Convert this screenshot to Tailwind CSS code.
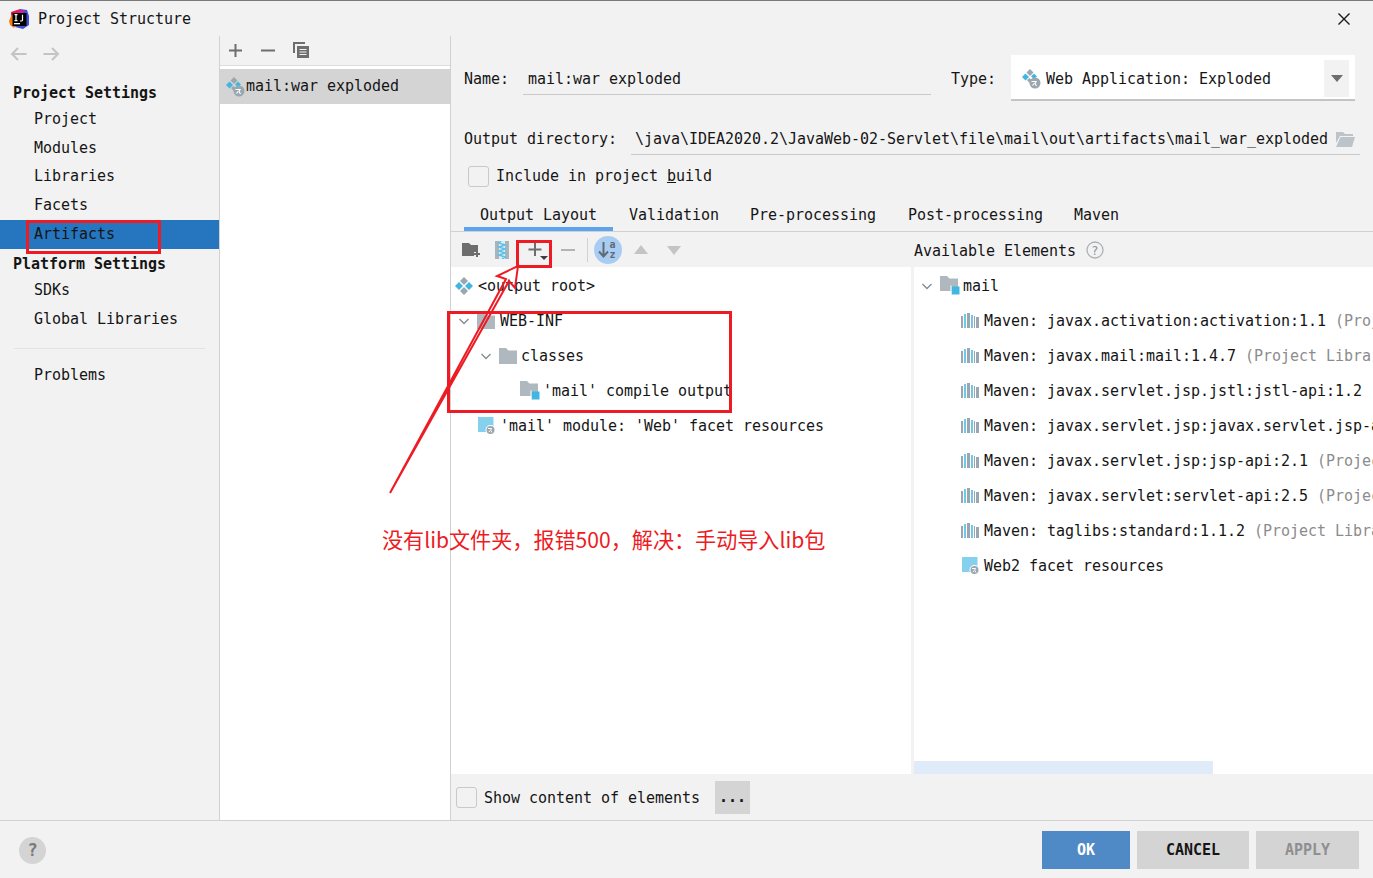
<!DOCTYPE html>
<html lang="en">
<head>
<meta charset="UTF-8">
<title>Project Structure</title>
<script src="https://cdn.jsdelivr.net/npm/@tailwindcss/browser@4"></script>
</head>
<body class="bg-[#f2f2f2]">
<svg width="0" height="0" class="absolute">
  <defs>
    <symbol id="artifact" viewBox="0 0 18 18">
      <path d="M9 0l4 4-4 4-4-4z" fill="#9aa7b0"/><path d="M9 10l4 4-4 4-4-4z" fill="#9aa7b0"/>
      <path d="M4 5l4 4-4 4-4-4z" fill="#40b6e0"/><path d="M14 5l4 4-4 4-4-4z" fill="#40b6e0"/>
    </symbol>
    <symbol id="artifactweb" viewBox="0 0 20 20">
      <path d="M9 0l3.500 3.500L9 7 5.500 3.500z" fill="#9aa7b0"/><path d="M4.500 4.500L8 8 4.500 11.500 1 8z" fill="#40b6e0"/>
      <path d="M13 4.500L16 7.500 13 10 10 7.500z" fill="#40b6e0"/><path d="M8.500 9l2 2-2 3-2.500-3z" fill="#9aa7b0"/>
      <circle cx="14" cy="14" r="5.500" fill="#9aa7b0"/><path d="M10.500 12.500h4.500l-1 2 1.500 2.500M11.500 16.500l1.500-2" fill="none" stroke="#fff" stroke-width="1.200"/>
    </symbol>
    <symbol id="folder" viewBox="0 0 18 16"><path d="M0 0h7l2.500 2.500H18V16H0z" fill="#afb8bf"/></symbol>
    <symbol id="source" viewBox="0 0 20 19">
      <path d="M0 0h7l2.500 2.500H18V15H0z" fill="#afb8bf"/><rect x="11.500" y="10.500" width="8" height="8" fill="#40b6e0"/><rect x="10.500" y="9.500" width="1" height="9" fill="#fff"/>
    </symbol>
    <symbol id="maven" viewBox="0 0 18 15">
      <rect y="3" width="2" height="12" fill="#9aa7b0"/><rect x="3" y="1" width="2" height="14" fill="#40b6e0" opacity=".75"/><rect x="6" y="0" width="3" height="15" fill="#9aa7b0"/>
      <rect x="10" y="2" width="2" height="13" fill="#40b6e0" opacity=".75"/><rect x="13" y="3" width="1" height="12" fill="#9aa7b0"/><rect x="15" y="4" width="3" height="11" fill="#9aa7b0"/>
    </symbol>
    <symbol id="webres" viewBox="0 0 18 18">
      <rect width="15.500" height="15" fill="#85d0ec"/><circle cx="12.500" cy="13" r="5" fill="#fff"/><circle cx="12.500" cy="13" r="4" fill="#9aa7b0"/>
      <path d="M10 11.500h3.500l-.8 1.800 1.300 2.200M11 15l1-1.500" fill="none" stroke="#fff"/>
    </symbol>
    <symbol id="chevron" viewBox="0 0 12 12"><path d="M1.500 4l4.500 4.500L10.500 4" fill="none" stroke="#7f8b91" stroke-width="1.300"/></symbol>
  </defs>
</svg>

<div class="relative w-[1373px] h-[878px] overflow-hidden flex flex-col border-t border-[#7a7a7a] font-['DejaVu_Sans_Mono',monospace] text-[15px] tracking-[-0.03px] leading-5 text-[#151515] bg-[#f2f2f2]">

  <!-- title bar -->
  <div class="h-[35px] flex items-center pl-[9px] pr-[22px] shrink-0">
    <svg width="20" height="20" viewBox="0 0 20 20">
      <path d="M2 3l9-3 3 2-5 9-7 3z" fill="#e8175d"/><path d="M0 12l3-7 6 8-4 6-4-3z" fill="#f97a12"/>
      <path d="M11 0l7 1 2 6v9l-6 4-8-2 5-10z" fill="#3f51d9"/><path d="M9 1h7l-5 8z" fill="#c9258b"/>
      <rect x="3.500" y="4" width="14" height="13" fill="#000"/><rect x="5" y="14" width="6" height="1.300" fill="#fff"/>
      <path d="M5.500 5.700h3M7 5.700v6M5.500 11.700h3M13.500 5.700v5.500q0 .8-2.500.8" fill="none" stroke="#fff" stroke-width="1.200"/>
    </svg>
    <span class="ml-[9px]">Project Structure</span>
    <svg class="ml-auto mt-[1px]" width="14" height="14" viewBox="0 0 14 14"><path d="M1.500 1.500l11 11M12.500 1.500l-11 11" stroke="#1a1a1a" stroke-width="1.400"/></svg>
  </div>

  <div class="flex flex-1 min-h-0">
    <!-- sidebar -->
    <div class="w-[220px] shrink-0 border-r border-[#d1d1d1] flex flex-col">
      <div class="h-[43px] pt-[10px] pl-[10px] flex gap-[16px]">
        <svg width="17" height="16" viewBox="0 0 17 16"><path d="M16.500 8H2M8 2L2 8l6 6" fill="none" stroke="#c4c4c4" stroke-width="2"/></svg>
        <svg width="17" height="16" viewBox="0 0 17 16"><path d="M.5 8H15M9 2l6 6-6 6" fill="none" stroke="#c4c4c4" stroke-width="2"/></svg>
      </div>
      <div class="h-[25px] pl-[13px] pt-[2px] flex items-center font-bold">Project Settings</div>
      <div class="h-[29px] pl-[34px] flex items-center">Project</div>
      <div class="h-[29px] pl-[34px] flex items-center">Modules</div>
      <div class="h-[28px] pl-[34px] flex items-center">Libraries</div>
      <div class="h-[30px] pl-[34px] flex items-center">Facets</div>
      <div class="h-[29px] pl-[34px] pb-[1px] flex items-center bg-[#2675bf]">Artifacts</div>
      <div class="h-[28px] pl-[13px] pt-[2px] flex items-center font-bold">Platform Settings</div>
      <div class="h-[27px] pl-[34px] pb-[2px] flex items-center">SDKs</div>
      <div class="h-[28px] pl-[34px] pt-[2px] flex items-center">Global Libraries</div>
      <div class="h-px ml-[14px] w-[191px] mt-[16px] bg-[#e2e2e2]"></div>
      <div class="h-[28px] mt-[11px] pl-[34px] pt-[2px] flex items-center">Problems</div>
    </div>

    <!-- artifact list -->
    <div class="w-[231px] shrink-0 border-r border-[#d1d1d1] flex flex-col bg-white">
      <div class="h-[30px] shrink-0 bg-[#f2f2f2] border-b border-[#dcdcdc] flex items-center pl-[8px]">
        <svg width="15" height="15" viewBox="0 0 15 15"><path d="M7.500 1v13M1 7.500h13" stroke="#6e6e6e" stroke-width="2"/></svg>
        <svg class="ml-[18px]" width="14" height="15" viewBox="0 0 14 15"><path d="M0 7.500h14" stroke="#6e6e6e" stroke-width="2"/></svg>
        <svg class="ml-[18px]" width="17" height="17" viewBox="0 0 17 17"><path d="M1 11V1h11" fill="none" stroke="#6e6e6e" stroke-width="2"/><rect x="4" y="4" width="12" height="12" fill="#6e6e6e"/><path d="M6.500 7.500h7M6.500 10h7M6.500 12.500h7" stroke="#f2f2f2"/></svg>
      </div>
      <div class="mt-[3px] h-[35px] bg-[#d4d4d4] flex items-center pl-[5px]">
        <svg width="20" height="20"><use href="#artifactweb"/></svg>
        <span class="ml-[1px] pb-[2px]">mail:war exploded</span>
      </div>
    </div>

    <!-- detail -->
    <div class="flex-1 min-w-0 flex flex-col">
      <div class="h-[84px] shrink-0 pt-[19px] pl-[13px] flex items-start">
        <div class="h-[46px] pt-[1px] flex items-center w-[59px]">Name:</div>
        <div class="w-[408px] h-[40px] pt-[8px] flex items-center pl-[5px] border-b border-[#c9c9c9]">mail:war exploded</div>
        <div class="ml-[20px] w-[60px] h-[46px] pt-[1px] flex items-center">Type:</div>
        <div class="w-[344px] h-[46px] pt-[3px] bg-white border-b-2 border-[#c4c4c4] flex items-center pl-[10px] pr-[6px]">
          <svg width="20" height="20"><use href="#artifactweb"/></svg>
          <span class="ml-[5px]">Web Application: Exploded</span>
          <div class="ml-auto w-[25px] h-[37px] bg-[#f2f2f2] flex items-center justify-center"><svg width="12" height="7" viewBox="0 0 12 7"><path d="M0 0h12L6 7z" fill="#6e6e6e"/></svg></div>
        </div>
      </div>
      <div class="h-[35px] shrink-0 pl-[13px] flex items-center">
        <span class="w-[167px] shrink-0 pt-[2px]">Output directory:</span>
        <div class="w-[729px] h-[35px] pt-[4px] flex items-center pl-[4px] pr-[5px] border-b border-[#c9c9c9]">
          <span class="whitespace-nowrap">\java\IDEA2020.2\JavaWeb-02-Servlet\file\mail\out\artifacts\mail_war_exploded</span>
          <svg class="ml-auto" width="19" height="15" viewBox="0 0 19 15"><path d="M0 0h7l2 2h8v2H4L0 11z" fill="#bcc3c9"/><path d="M4.500 5H19l-3 10H0z" fill="#bcc3c9"/></svg>
        </div>
      </div>
      <div class="h-[42px] shrink-0 pl-[17px] flex items-center">
        <span class="w-[21px] h-[21px] rounded-[3px] border border-[#c9c9c9] bg-[#f2f2f2]"></span>
        <span class="ml-[7px]">Include in project <span class="underline">b</span>uild</span>
      </div>
      <div class="h-[35px] shrink-0 pl-[13px] flex border-b border-[#d1d1d1]">
        <div class="px-[16px] h-full pb-[2px] flex items-end border-b-4 border-[#5ca4ee]">Output Layout</div>
        <div class="pl-[16px] pr-[15px] h-full pb-[6px] flex items-end">Validation</div>
        <div class="pl-[16px] pr-[16px] h-full pb-[6px] flex items-end">Pre-processing</div>
        <div class="pl-[16px] pr-[15px] h-full pb-[6px] flex items-end">Post-processing</div>
        <div class="pl-[16px] h-full pb-[6px] flex items-end">Maven</div>
      </div>
      <div class="h-[35px] shrink-0 flex items-center">
        <div class="w-[463px] shrink-0 flex items-center pl-[11px]">
          <svg width="19" height="16" viewBox="0 0 19 16"><path d="M0 1h7l2 2h7v7h-4v4H0z" fill="#6e6e6e"/><path d="M15 9v6M12 12h6" stroke="#6e6e6e" stroke-width="2"/></svg>
          <svg class="ml-[14px]" width="14" height="18" viewBox="0 0 14 18"><rect width="14" height="18" fill="#aab4bb"/><rect x="4" width="6" height="18" fill="#d8eef7"/><path d="M6 0L4 2l6 2-6 2 6 2-6 2 6 2-6 2 6 2-3 2" fill="none" stroke="#5cc0e6" stroke-width="1.500"/></svg>
          <svg class="ml-[19px]" width="20" height="20" viewBox="0 0 20 20"><path d="M7 3v13M.5 9.500h13" stroke="#6e6e6e" stroke-width="2"/><path d="M12 16h8l-4 4z" fill="#3c3c3c"/></svg>
          <svg class="ml-[13px]" width="14" height="14" viewBox="0 0 14 14"><path d="M0 7h14" stroke="#b4b4b4" stroke-width="2"/></svg>
          <div class="ml-[12px] w-px h-[24px] bg-[#d1d1d1]"></div>
          <svg class="ml-[6px]" width="28" height="28" viewBox="0 0 28 28">
            <circle cx="14" cy="14" r="14" fill="#a9cdf2"/><path d="M9.500 6v14M5 15.500l4.500 5 4.500-5" fill="none" stroke="#5f6b75" stroke-width="2"/>
            <text x="15.500" y="12" font-size="10" font-weight="bold" fill="#5f6b75" font-family="DejaVu Sans Mono">a</text><text x="15.500" y="22" font-size="10" font-weight="bold" fill="#5f6b75" font-family="DejaVu Sans Mono">z</text>
          </svg>
          <svg class="ml-[11px]" width="16" height="10" viewBox="0 0 16 10"><path d="M8 0l7 9H1z" fill="#c4c4c4"/></svg>
          <svg class="ml-[17px]" width="16" height="10" viewBox="0 0 16 10"><path d="M1 1h14L8 10z" fill="#c4c4c4"/></svg>
        </div>
        <span class="pt-[2px]">Available Elements</span>
        <svg class="ml-[10px]" width="18" height="18" viewBox="0 0 18 18"><circle cx="9" cy="9" r="8" fill="none" stroke="#aab2b8" stroke-width="1.300"/><text x="9" y="13.500" text-anchor="middle" font-size="12" fill="#8a9299" font-family="DejaVu Sans">?</text></svg>
      </div>

      <!-- tree panes -->
      <div class="h-[507px] shrink-0 flex">
        <div class="w-[460px] shrink-0 pt-[1px] bg-white flex flex-col whitespace-nowrap">
          <div class="h-[35px] flex items-center pl-[4px]"><svg class="shrink-0" width="18" height="18"><use href="#artifact"/></svg><span class="ml-[5px]">&lt;output root&gt;</span></div>
          <div class="h-[35px] flex items-center pl-[7px]"><svg class="shrink-0" width="12" height="12"><use href="#chevron"/></svg><svg class="ml-[7px] shrink-0" width="18" height="16"><use href="#folder"/></svg><span class="ml-[5px]">WEB-INF</span></div>
          <div class="h-[35px] flex items-center pl-[29px]"><svg class="shrink-0" width="12" height="12"><use href="#chevron"/></svg><svg class="ml-[7px] shrink-0" width="18" height="16"><use href="#folder"/></svg><span class="ml-[4px]">classes</span></div>
          <div class="h-[35px] flex items-center pl-[69px]"><svg class="shrink-0" width="20" height="19"><use href="#source"/></svg><span class="ml-[3px]">'mail' compile output</span></div>
          <div class="h-[35px] flex items-center pl-[27px]"><svg class="shrink-0" width="18" height="18"><use href="#webres"/></svg><span class="ml-[4px]">'mail' module: 'Web' facet resources</span></div>
        </div>
        <div class="w-[3px] shrink-0"></div>
        <div class="flex-1 min-w-0 pt-[1px] relative bg-white overflow-hidden flex flex-col whitespace-nowrap">
          <div class="h-[35px] flex items-center pl-[7px]"><svg class="shrink-0" width="12" height="12"><use href="#chevron"/></svg><svg class="ml-[7px] shrink-0" width="20" height="19"><use href="#source"/></svg><span class="ml-[3px]">mail</span></div>
          <div class="h-[35px] flex items-center pl-[47px]"><svg class="shrink-0" width="18" height="15"><use href="#maven"/></svg><span class="ml-[5px]">Maven: javax.activation:activation:1.1 <span class="text-[#8c8c8c]">(Project Library)</span></span></div>
          <div class="h-[35px] flex items-center pl-[47px]"><svg class="shrink-0" width="18" height="15"><use href="#maven"/></svg><span class="ml-[5px]">Maven: javax.mail:mail:1.4.7 <span class="text-[#8c8c8c]">(Project Library)</span></span></div>
          <div class="h-[35px] flex items-center pl-[47px]"><svg class="shrink-0" width="18" height="15"><use href="#maven"/></svg><span class="ml-[5px]">Maven: javax.servlet.jsp.jstl:jstl-api:1.2</span></div>
          <div class="h-[35px] flex items-center pl-[47px]"><svg class="shrink-0" width="18" height="15"><use href="#maven"/></svg><span class="ml-[5px]">Maven: javax.servlet.jsp:javax.servlet.jsp-api:2.2</span></div>
          <div class="h-[35px] flex items-center pl-[47px]"><svg class="shrink-0" width="18" height="15"><use href="#maven"/></svg><span class="ml-[5px]">Maven: javax.servlet.jsp:jsp-api:2.1 <span class="text-[#8c8c8c]">(Project Library)</span></span></div>
          <div class="h-[35px] flex items-center pl-[47px]"><svg class="shrink-0" width="18" height="15"><use href="#maven"/></svg><span class="ml-[5px]">Maven: javax.servlet:servlet-api:2.5 <span class="text-[#8c8c8c]">(Project Library)</span></span></div>
          <div class="h-[35px] flex items-center pl-[47px]"><svg class="shrink-0" width="18" height="15"><use href="#maven"/></svg><span class="ml-[5px]">Maven: taglibs:standard:1.1.2 <span class="text-[#8c8c8c]">(Project Library)</span></span></div>
          <div class="h-[35px] flex items-center pl-[48px]"><svg class="shrink-0" width="18" height="18"><use href="#webres"/></svg><span class="ml-[4px]">Web2 facet resources</span></div>
          <div class="absolute left-0 bottom-0 w-[299px] h-[13px] bg-[#dfebf9]"></div>
        </div>
      </div>

      <div class="flex-1 flex items-center pl-[5px]">
        <span class="w-[21px] h-[21px] rounded-[3px] border border-[#c9c9c9] bg-[#f2f2f2]"></span>
        <span class="ml-[7px] pt-[1px]">Show content of elements</span>
        <div class="ml-[15px] w-[35px] h-[33px] bg-[#d4d4d4] flex items-center justify-center font-bold">...</div>
      </div>
    </div>
  </div>

  <!-- footer -->
  <div class="h-[58px] shrink-0 border-t border-[#d1d1d1] flex items-center pl-[19px] pr-[14px] font-bold">
    <div class="w-[27px] h-[27px] mt-[1px] rounded-full bg-[#d4d4d4] flex items-center justify-center text-[17px] text-[#7a7a7a]">?</div>
    <div class="ml-auto w-[88px] h-[38px] bg-[#4f8ac6] text-white flex items-center justify-center">OK</div>
    <div class="ml-[7px] w-[112px] h-[38px] bg-[#d4d4d4] flex items-center justify-center">CANCEL</div>
    <div class="ml-[7px] w-[103px] h-[38px] bg-[#d4d4d4] text-[#8f8f8f] flex items-center justify-center">APPLY</div>
  </div>

  <!-- annotations drawn over the screenshot -->
  <div class="absolute left-[26px] top-[219px] w-[135px] h-[34px] border-[3px] border-[#ed1c24]"></div>
  <div class="absolute left-[516px] top-[239px] w-[36px] h-[28px] border-[3px] border-[#ed1c24]"></div>
  <div class="absolute left-[447px] top-[310px] w-[285px] h-[102px] border-[3px] border-[#ed1c24]"></div>
  <svg class="absolute left-[380px] top-[255px]" width="150" height="245" viewBox="380 256 150 245">
    <path d="M390 493L506 279 497 276 518 266 515 288 509 281z" fill="none" stroke="#ed1c24" stroke-width="2" stroke-linejoin="miter"/>
  </svg>
  <div class="absolute left-[382px] top-[522px] whitespace-nowrap font-['Noto_Sans_CJK_SC',sans-serif] tracking-normal text-[21.100px] leading-8 text-[#ed1c24]">没有lib文件夹，报错500，解决：手动导入lib包</div>
</div>
</body>
</html>
